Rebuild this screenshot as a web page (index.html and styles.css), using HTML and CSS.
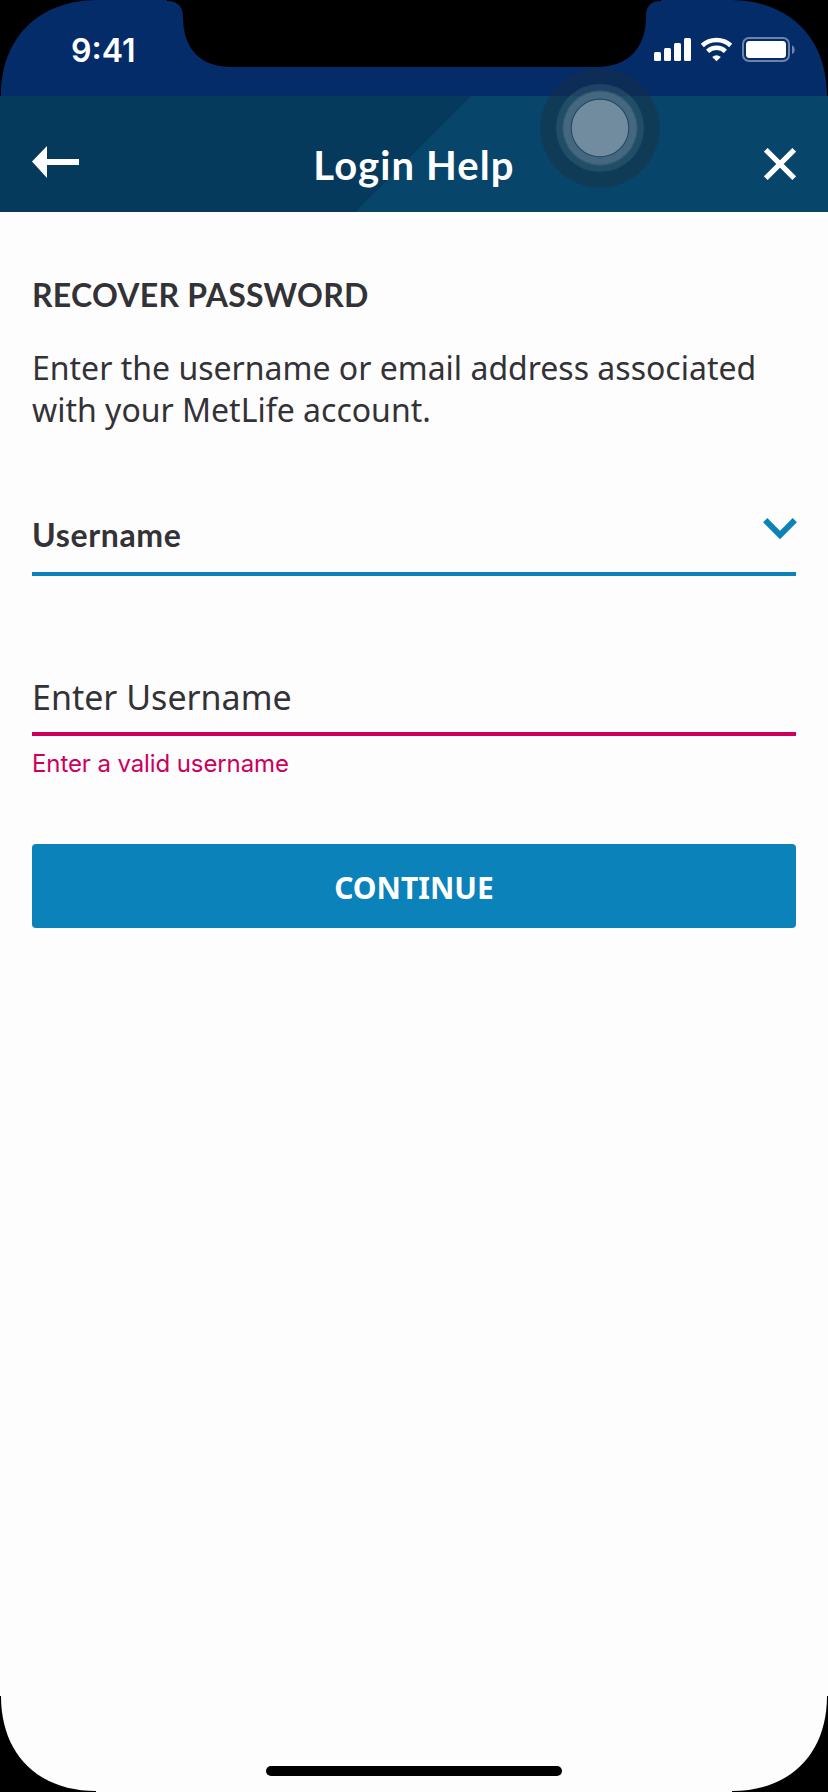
FILE: index.html
```html
<!DOCTYPE html>
<html lang="en">
<head>
<meta charset="utf-8">
<title>Login Help</title>
<link rel="stylesheet" href="styles.css">
</head>
<body>
<div class="phone">
  <div class="status">
    <span class="time">9:41</span>
    <svg class="indicators" width="144" height="28" viewBox="0 0 144 28">
      <g fill="#fff">
        <rect x="1" y="15" width="7" height="9" rx="1.5"/>
        <rect x="11" y="11" width="7" height="13" rx="1.5"/>
        <rect x="21" y="6" width="7" height="18" rx="1.5"/>
        <rect x="31" y="1" width="7" height="23" rx="1.5"/>
        <path d="M59.200 20Q63.500 16.600 67.800 20L63.500 24.300Z"/>
      </g>
      <g fill="none" stroke="#fff" stroke-width="4.500">
        <path d="M49.300 8.500C57 1.200 70 1.200 77.700 8.500"/>
        <path d="M54.600 14.300C59.500 9.700 67.500 9.700 72.400 14.300"/>
      </g>
      <rect x="90" y="1" width="46" height="23" rx="6" fill="none" stroke="#6d83ae" stroke-width="2"/>
      <rect x="93" y="4" width="40" height="17" rx="3.500" fill="#fff"/>
      <path d="M139 8.500C142.500 9.500 142.500 16 139 17Z" fill="#7086af"/>
    </svg>
  </div>
  <header class="bar">
    <svg class="back" width="48" height="34" viewBox="0 0 48 34"><path d="M0 16.500L15 1V14H47V20H15V33Z" fill="#fff"/></svg>
    <h1 class="title">Login Help</h1>
    <svg class="close" width="32" height="32" viewBox="0 0 32 32"><path d="M1.800 1.800L30.200 30.200M30.200 1.800L1.800 30.200" stroke="#fff" stroke-width="5.200"/></svg>
  </header>
  <main class="content">
    <h2 class="heading">RECOVER PASSWORD</h2>
    <p class="intro">Enter the username or email address associated<br>with your MetLife account.</p>
    <div class="select">
      <span class="select-label">Username</span>
      <svg class="chevron" width="34" height="22" viewBox="0 0 34 22"><path d="M2.200 2.200L17 17L31.800 2.200" fill="none" stroke="#0c82bb" stroke-width="6"/></svg>
    </div>
    <div class="field"><span class="field-text">Enter Username</span></div>
    <p class="error">Enter a valid username</p>
    <button class="continue"><span class="continue-text">CONTINUE</span></button>
  </main>
  <svg class="touch" width="120" height="120" viewBox="0 0 120 120">
    <circle cx="60" cy="60" r="59.500" fill="#1b2d3c" fill-opacity=".42"/>
    <circle cx="60" cy="60" r="44" fill="#5b8296" fill-opacity=".25"/>
    <circle cx="60" cy="60" r="37.500" fill="#456880"/>
    <circle cx="60" cy="60" r="37" fill="none" stroke="#2f5670"/>
    <circle cx="60" cy="60" r="28.800" fill="#708c9e" stroke="#214d69" stroke-width="1.200"/>
  </svg>
  <svg class="bezel" width="828" height="1792" viewBox="0 0 828 1792">
    <path d="M0 0H96C38 1 1 38 1 96H0Z"/>
    <path d="M828 0H732C790 1 827 38 827 96H828Z"/>
    <path d="M0 1792H96V1791C38 1791 1 1754 1 1696H0Z"/>
    <path d="M828 1792H732V1791C790 1791 827 1754 827 1696H828Z"/>
    <path d="M167 0H661V1C650 1 646 7 646 17C646 48 628 67 597 67H231C200 67 183 48 183 17C183 7 178 1 167 1Z"/>
    <rect x="266" y="1766" width="296" height="10" rx="5"/>
  </svg>
</div>
</body>
</html>
```
FILE: styles.css
```css
body { margin: 0; }
.phone {
  position: relative;
  width: 828px;
  height: 1792px;
  overflow: hidden;
  background: #fefdfe;
  color: #333236;
  font-family: "Noto Sans", sans-serif;
}
.status {
  box-sizing: border-box;
  height: 96px;
  padding: 30px 32px 0 71px;
  display: flex;
  justify-content: space-between;
  align-items: flex-start;
  background: #042c69;
}
.time {
  padding-top: 1px;
  font: 600 32px/40px Inter, sans-serif;
  color: #fff;
}
.indicators { margin: 7px -1px 0 0; }
.bar {
  box-sizing: border-box;
  height: 116px;
  padding: 18px 32px 0;
  display: grid;
  grid-template-columns: 1fr auto 1fr;
  align-items: center;
  background: linear-gradient(135deg, #053a5d 50%, #07456b 50%);
}
.back { margin-bottom: 2px; }
.title {
  margin: 0;
  padding-top: 4px;
  font: 700 40px/48px Lato, sans-serif;
  letter-spacing: 1.1px;
  color: #fff;
}
.close {
  justify-self: end;
  margin-top: 2px;
}
.content {
  padding: 63px 32px 0;
  display: flex;
  flex-direction: column;
}
.heading {
  margin: 0;
  font: 700 32px/40px Lato, sans-serif;
  letter-spacing: 0.25px;
}
.intro {
  margin: 32px 0 0;
  font-size: 32px;
  line-height: 42px;
  white-space: nowrap;
}
.select {
  box-sizing: border-box;
  height: 81px;
  margin-top: 64px;
  padding-top: 20px;
  border-bottom: 4px solid #0c82bb;
  display: flex;
  justify-content: space-between;
  align-items: flex-start;
}
.select-label {
  font: 700 32px/40px Lato, sans-serif;
  letter-spacing: 0.65px;
}
.chevron { margin: 3px -1px 0 0; }
.field {
  box-sizing: border-box;
  height: 80px;
  margin-top: 80px;
  padding-top: 17px;
  border-bottom: 4px solid #cc005c;
  font-size: 34px;
  line-height: 48px;
}
.error {
  margin: 12px 0 0;
  font: 400 24px/32px Inter, sans-serif;
  letter-spacing: -0.1px;
  color: #cc005c;
}
.continue {
  height: 84px;
  margin-top: 64px;
  padding: 3px 0 0;
  border: 0;
  border-radius: 4px;
  background: #0c82bb;
  color: #fff;
  font: 700 30px/40px "Noto Sans", sans-serif;
}
.touch {
  position: absolute;
  left: 540px;
  top: 68px;
}
.bezel {
  position: absolute;
  left: 0;
  top: 0;
}
```
